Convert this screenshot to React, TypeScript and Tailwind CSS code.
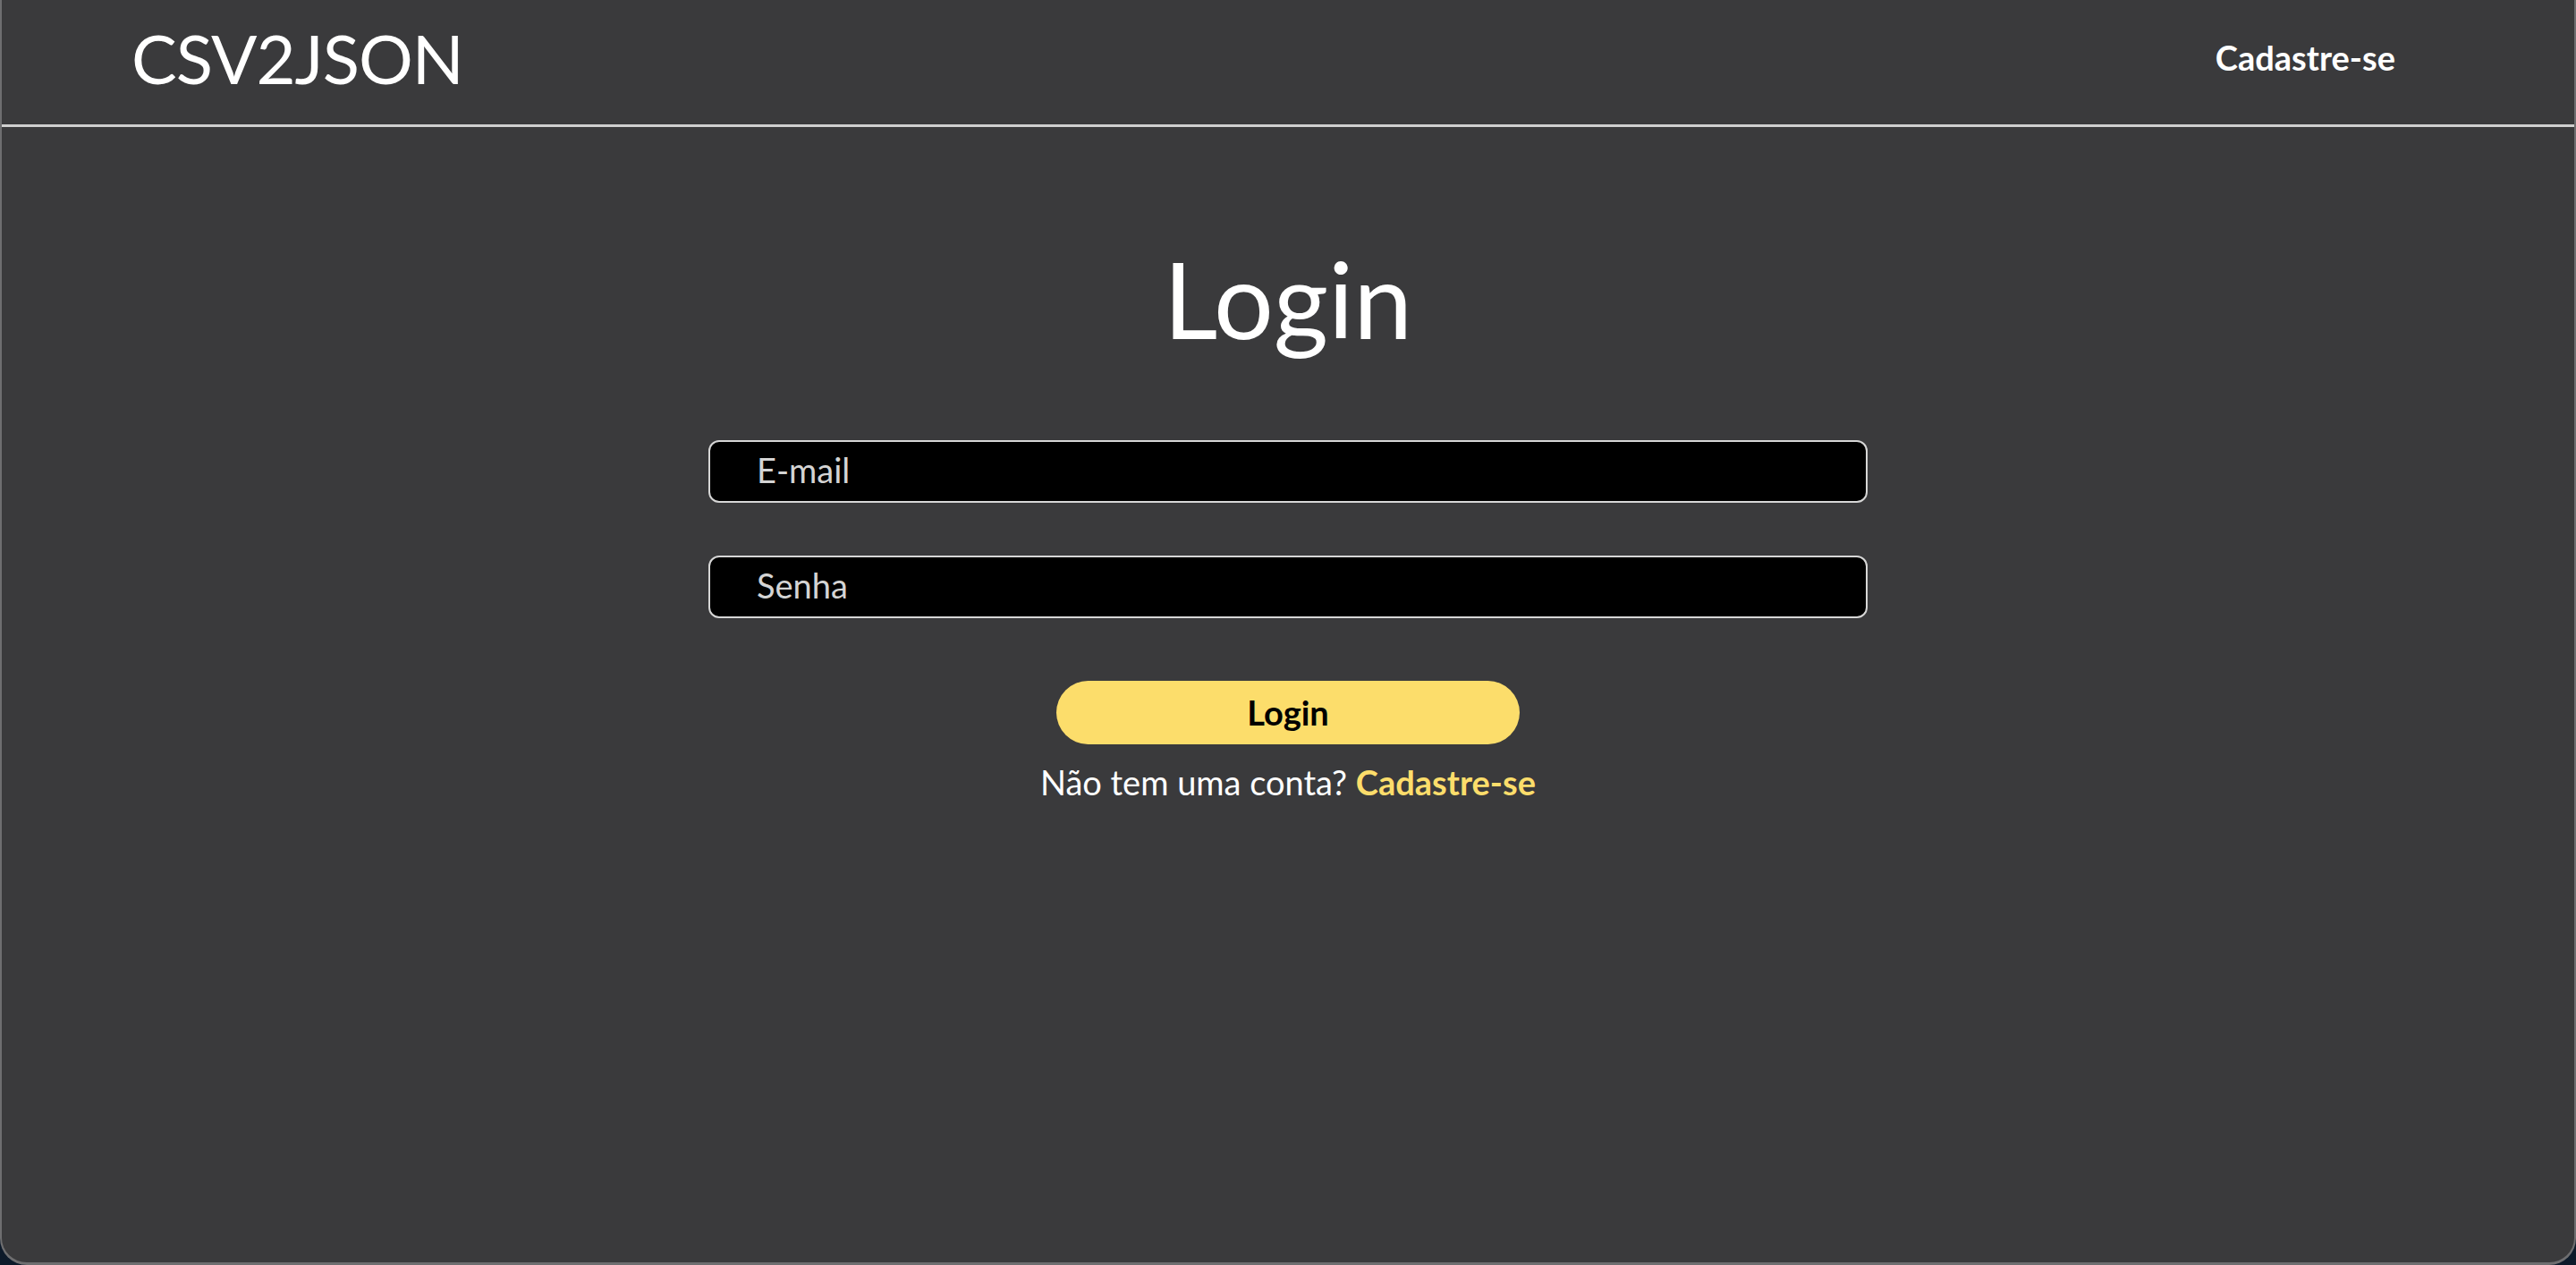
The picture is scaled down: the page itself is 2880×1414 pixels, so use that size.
import { useState } from "react";

function Header() {
    return (
        <header className="flex items-center justify-between h-[142px] pb-[10px] pl-[145px] pr-[200px] border-b-[3px] border-[#cfcfcf]">
            <span className="text-[76px] leading-none text-white tracking-[-1px]">CSV2JSON</span>
            <a href="#" className="text-[38px] font-bold text-white">Cadastre-se</a>
        </header>
    );
}

function LoginForm() {
    const [email, setEmail] = useState("");
    const [password, setPassword] = useState("");

    return (
        <main className="flex flex-col items-center pt-[121px]">
            <h1 className="text-[118px] leading-[1.2] text-white">Login</h1>

            <form className="flex flex-col items-center w-[1296px] mt-[87px]" onSubmit={(e) => e.preventDefault()}>
                <input
                    type="email"
                    placeholder="E-mail"
                    value={email}
                    onChange={(e) => setEmail(e.target.value)}
                    className="w-full h-[70px] pl-[52px] pr-[20px] pb-[3px] bg-black border-2 border-[#d6d6d6] rounded-[12px] text-[38px] text-white placeholder:text-[#d4d4d4] outline-none"
                />
                <input
                    type="password"
                    placeholder="Senha"
                    value={password}
                    onChange={(e) => setPassword(e.target.value)}
                    className="w-full h-[70px] mt-[59px] pl-[52px] pr-[20px] pb-[3px] bg-black border-2 border-[#d6d6d6] rounded-[12px] text-[38px] text-white placeholder:text-[#d4d4d4] outline-none"
                />
                <button
                    type="submit"
                    className="w-[518px] h-[71px] mt-[70px] rounded-full bg-[#fcdd6b] text-[38px] font-bold text-black"
                >
                    Login
                </button>
            </form>

            <p className="mt-[14px] text-[38px] text-white">
                Não tem uma conta? <a href="#" className="font-bold text-[#fcdd6b]">Cadastre-se</a>
            </p>
        </main>
    );
}

export default function App() {
    return (
        <div className="h-[1414px] bg-[#0d1a2a] font-['Lato',sans-serif]">
            <div className="h-full bg-[#3a3a3c] border-l-2 border-r-2 border-b-[3px] border-[#6e6e70] rounded-b-[30px] overflow-hidden">
                <Header />
                <LoginForm />
            </div>
        </div>
    );
}
